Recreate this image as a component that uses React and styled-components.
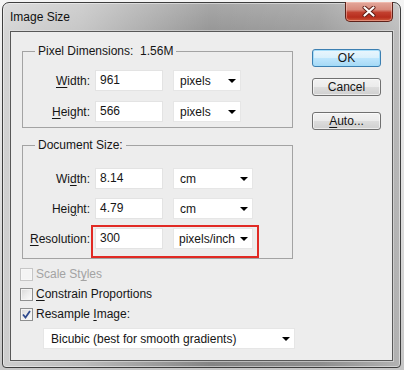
import React from "react";
import styled, { createGlobalStyle } from "styled-components";

const Global = createGlobalStyle`
  html, body { margin: 0; padding: 0; }
  body {
    width: 404px; height: 370px; overflow: hidden;
    background: linear-gradient(180deg, #f4f4f4 0%, #dcdcdc 60%, #c6c6c6 100%);
    font-family: "Liberation Sans", Arial, sans-serif;
    font-size: 12px;
    color: #151515;
  }
`;

const Window = styled.div`
  box-sizing: border-box;
  width: 399px;
  height: 366px;
  margin: 2px 0 0 2px;
  border: 1px solid #3e3e3e;
  border-radius: 7px 7px 4px 4px;
  box-shadow: inset 0 0 0 1px rgba(255, 255, 255, 0.45);
  background:
    linear-gradient(90deg, rgba(255,255,255,0.6) 0%, rgba(255,255,255,0.45) 20%, rgba(255,255,255,0) 52%, rgba(255,255,255,0.08) 80%, rgba(255,255,255,0.38) 100%),
    linear-gradient(180deg, #a8a8a8 0px, #969696 30px, #8c8c8c 140px, #848484 100%);
  display: flex;
  flex-direction: column;
`;

const TitleBar = styled.div`
  height: 28px;
  display: flex;
  align-items: flex-start;
  justify-content: space-between;
  padding-left: 7px;
`;

const Title = styled.div`
  font-family: "Liberation Sans", Arial, sans-serif;
  font-size: 12px;
  line-height: 28px;
  color: #111;
`;

const CloseButton = styled.div`
  box-sizing: border-box;
  width: 48px;
  height: 20px;
  margin: -1px 7px 0 0;
  border: 1px solid #5e2119;
  border-top: none;
  border-radius: 0 0 5px 5px;
  background: linear-gradient(180deg, #e3a89c 0%, #d88a7c 40%, #c2402f 55%, #b72d1d 80%, #cf5b3c 100%);
  box-shadow: inset 0 0 0 1px rgba(255, 210, 200, 0.45);
  display: flex;
  align-items: center;
  justify-content: center;
`;

const Client = styled.div`
  box-sizing: border-box;
  flex: 1;
  margin: 0 7px 6px 7px;
  border: 1px solid #585858;
  box-shadow: 0 0 0 1px rgba(230, 230, 230, 0.55);
  background: #ededed;
  display: flex;
  padding: 12px 0 0 9px;
  gap: 19px;
`;

const MainColumn = styled.div`
  width: 273px;
  display: flex;
  flex-direction: column;
`;

const Group = styled.fieldset`
  box-sizing: border-box;
  margin: ${(p) => p.$mt || 0}px 0 0 2px;
  width: 271px;
  min-width: 0;
  border: 1px solid #a3a3a3;
  padding: ${(p) => p.$pt}px 0 ${(p) => p.$pb}px 0;
  display: flex;
  flex-direction: column;
  gap: ${(p) => p.$gap}px;
`;

const Legend = styled.legend`
  margin-left: 12px;
  padding: 0 3px;
  line-height: 14px;
  white-space: pre;
`;

const FieldRow = styled.div`
  display: flex;
  align-items: center;
  height: 21px;
`;

const Label = styled.div`
  width: 67px;
  margin-right: 5px;
  text-align: right;
  white-space: nowrap;
`;

const Controls = styled.div`
  position: relative;
  display: flex;
  align-items: center;
  gap: 10px;
`;

const TextBox = styled.div`
  box-sizing: border-box;
  width: 68px;
  height: 21px;
  background: #fff;
  border: 1px solid #e3e3e3;
  padding-left: 4px;
  line-height: 19px;
`;

const SelectBox = styled.div`
  box-sizing: border-box;
  width: ${(p) => p.$w}px;
  height: ${(p) => p.$h || 21}px;
  margin-left: ${(p) => p.$ml || 0}px;
  margin-top: ${(p) => p.$mt || 0}px;
  background: #fff;
  border: 1px solid #e6e6e6;
  padding: 0 4px 0 ${(p) => p.$pl || 5}px;
  display: flex;
  align-items: center;
  justify-content: space-between;
  white-space: nowrap;
`;

const Arrow = styled.span`
  width: 0;
  height: 0;
  border-left: 4px solid transparent;
  border-right: 4px solid transparent;
  border-top: 4px solid #000;
  margin-top: 1px;
`;

const Highlight = styled.div`
  position: absolute;
  top: -3px;
  left: -4px;
  right: -6px;
  bottom: -9px;
  border: 2px solid #e12a24;
  pointer-events: none;
`;

const CheckRow = styled.div`
  display: flex;
  align-items: center;
  height: 20px;
  gap: 3px;
  color: ${(p) => (p.$disabled ? "#a3a3a3" : "#151515")};
`;

const Box = styled.span`
  box-sizing: border-box;
  width: 13px;
  height: 13px;
  border: 1px solid ${(p) => (p.$disabled ? "#c6c6c6" : "#8e8f8f")};
  background: ${(p) =>
    p.$disabled
      ? "#f4f4f4"
      : "linear-gradient(135deg, #d8d8d8 0%, #ececec 50%, #fbfbfb 100%)"};
  box-shadow: inset 0 0 0 1px ${(p) => (p.$disabled ? "#f7f7f7" : "#f4f4f4")};
  display: flex;
  align-items: center;
  justify-content: center;
`;

const Checks = styled.div`
  display: flex;
  flex-direction: column;
  margin-top: 5px;
`;

const ButtonColumn = styled.div`
  display: flex;
  flex-direction: column;
  padding-top: 5px;
`;

const Button = styled.div`
  box-sizing: border-box;
  width: 69px;
  height: 18px;
  margin-top: ${(p) => p.$mt || 0}px;
  border: 1px solid ${(p) => (p.$default ? "#3c7fb1" : "#707070")};
  border-radius: 3px;
  background: ${(p) =>
    p.$default
      ? "linear-gradient(180deg, #eaf6fd 0%, #d9f0fc 50%, #bee6fd 51%, #a7d9f5 100%)"
      : "linear-gradient(180deg, #f2f2f2 0%, #ebebeb 50%, #dddddd 51%, #cfcfcf 100%)"};
  box-shadow: inset 0 0 0 1px ${(p) => (p.$default ? "rgba(160,220,250,0.9)" : "rgba(255,255,255,0.6)")};
  display: flex;
  align-items: center;
  justify-content: center;
  line-height: 16px;
`;

const U = styled.span`
  text-decoration: underline;
  text-underline-offset: 2px;
`;

function CheckMark() {
  return (
    <svg width="9" height="9" viewBox="0 0 9 9">
      <path d="M1 4.5 L3.5 7.5 L8 1" fill="none" stroke="#2e4a8e" strokeWidth="1.8" />
    </svg>
  );
}

function CloseGlyph() {
  return (
    <svg width="14" height="11" viewBox="0 0 14 11">
      <path d="M2.5 1.5 L11.5 9.5 M11.5 1.5 L2.5 9.5" stroke="#5a1a12" strokeWidth="4" strokeLinecap="round" />
      <path d="M2.5 1.5 L11.5 9.5 M11.5 1.5 L2.5 9.5" stroke="#ffffff" strokeWidth="2.2" strokeLinecap="round" />
    </svg>
  );
}

export default function App() {
  return (
    <>
      <Global />
      <Window>
        <TitleBar>
          <Title>Image Size</Title>
          <CloseButton>
            <CloseGlyph />
          </CloseButton>
        </TitleBar>
        <Client>
          <MainColumn>
            <Group $pt={12} $pb={5} $gap={10}>
              <Legend>{"Pixel Dimensions:  1.56M"}</Legend>
              <FieldRow>
                <Label><U>W</U>idth:</Label>
                <Controls>
                  <TextBox>961</TextBox>
                  <SelectBox $w={68} $pl={6}>pixels<Arrow /></SelectBox>
                </Controls>
              </FieldRow>
              <FieldRow>
                <Label><U>H</U>eight:</Label>
                <Controls>
                  <TextBox>566</TextBox>
                  <SelectBox $w={68} $pl={6}>pixels<Arrow /></SelectBox>
                </Controls>
              </FieldRow>
            </Group>
            <Group $mt={10} $pt={16} $pb={9} $gap={9}>
              <Legend>Document Size:</Legend>
              <FieldRow>
                <Label>Wi<U>d</U>th:</Label>
                <Controls>
                  <TextBox>8.14</TextBox>
                  <SelectBox $w={80} $pl={6}>cm<Arrow /></SelectBox>
                </Controls>
              </FieldRow>
              <FieldRow>
                <Label>Hei<U>g</U>ht:</Label>
                <Controls>
                  <TextBox>4.79</TextBox>
                  <SelectBox $w={80} $pl={6}>cm<Arrow /></SelectBox>
                </Controls>
              </FieldRow>
              <FieldRow>
                <Label><U>R</U>esolution:</Label>
                <Controls>
                  <TextBox>300</TextBox>
                  <SelectBox $w={80} $pl={5}>pixels/inch<Arrow /></SelectBox>
                  <Highlight />
                </Controls>
              </FieldRow>
            </Group>
            <Checks>
              <CheckRow $disabled>
                <Box $disabled />
                <span>Scale St<U>y</U>les</span>
              </CheckRow>
              <CheckRow>
                <Box />
                <span><U>C</U>onstrain Proportions</span>
              </CheckRow>
              <CheckRow>
                <Box><CheckMark /></Box>
                <span>Resample <U>I</U>mage:</span>
              </CheckRow>
            </Checks>
            <SelectBox $w={252} $ml={23} $pl={7} $mt={4}>
              Bicubic (best for smooth gradients)<Arrow />
            </SelectBox>
          </MainColumn>
          <ButtonColumn>
            <Button $default>OK</Button>
            <Button $mt={11}>Cancel</Button>
            <Button $mt={16}><span><U>A</U>uto...</span></Button>
          </ButtonColumn>
        </Client>
      </Window>
    </>
  );
}
